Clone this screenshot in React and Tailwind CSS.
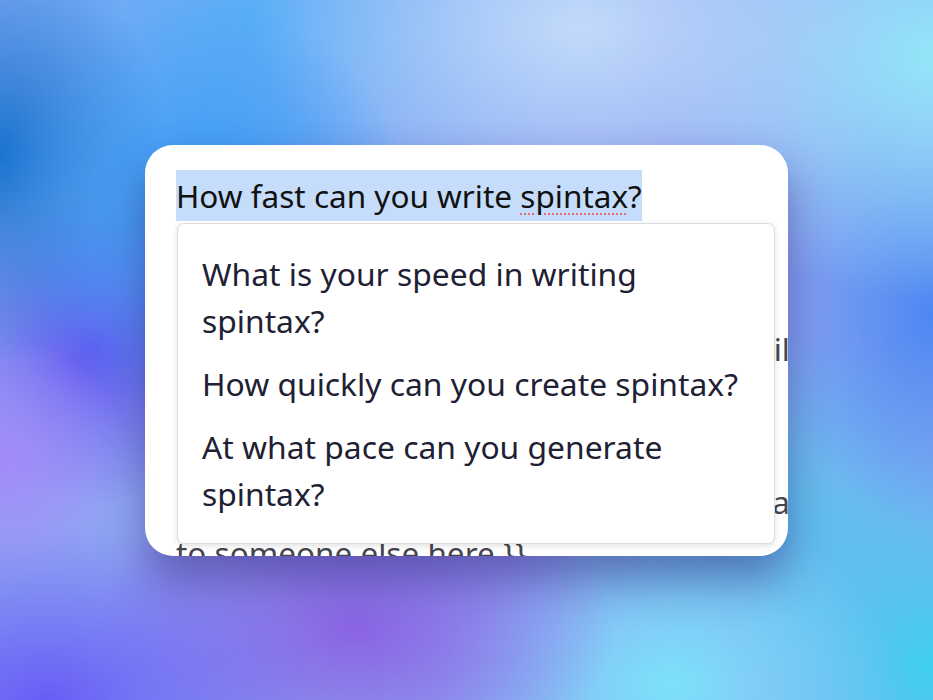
export default function App() {
  const options = [
    ["What is your speed in writing", "spintax?"],
    ["How quickly can you create spintax?"],
    ["At what pace can you generate", "spintax?"],
  ];

  return (
    <div
      className="flex h-[700px] w-full items-center justify-center bg-[#8fa6f2] [background-image:radial-gradient(ellipse_22%_30%_at_22%_30%,#2c9cf7_0%,transparent_100%),radial-gradient(ellipse_18%_30%_at_0%_22%,#1a74cf_0%,transparent_100%),radial-gradient(ellipse_35%_30%_at_62%_4%,#c2dbfa_0%,transparent_100%),radial-gradient(ellipse_30%_35%_at_100%_8%,#93e6f9_0%,transparent_100%),radial-gradient(ellipse_18%_30%_at_100%_45%,#4c88f2_0%,transparent_100%),radial-gradient(ellipse_14%_18%_at_0%_66%,#a48af9_0%,transparent_100%),radial-gradient(ellipse_16%_22%_at_10%_50%,#6358ef_0%,transparent_100%),radial-gradient(ellipse_30%_25%_at_5%_100%,#675ef6_0%,transparent_100%),radial-gradient(ellipse_28%_22%_at_38%_90%,#8a63e4_0%,transparent_100%),radial-gradient(ellipse_25%_25%_at_72%_98%,#7ce2fa_0%,transparent_100%),radial-gradient(ellipse_22%_30%_at_100%_95%,#3dcff0_0%,transparent_100%),radial-gradient(ellipse_25%_25%_at_82%_72%,#5cc4ee_0%,transparent_100%),radial-gradient(ellipse_40%_30%_at_28%_2%,#59aef7_0%,transparent_100%)]"
      style={{ fontFamily: '"Noto Sans", "Open Sans", sans-serif' }}
    >
      <div className="relative h-[411px] w-[643px] overflow-hidden rounded-[28px] bg-white shadow-[0_24px_44px_rgba(40,25,110,0.45)]">
        <div className="pl-[31px] pt-[25px] text-[31.5px] leading-[51px] text-[#45454f]">
          <div className="whitespace-nowrap">
            <span className="inline-block bg-[#c6dcfb] leading-[51px] text-[#111111]">
              How fast can you write{" "}
              <span className="underline decoration-[#e06b7d] decoration-dotted decoration-2 underline-offset-[6px]">
                spintax
              </span>
              ?
            </span>
          </div>
          <div className="h-[51px]" />
          <div className="h-[51px]" />
          <div className="-mr-[2px] flex h-[51px] justify-end whitespace-nowrap">il</div>
          <div className="h-[51px]" />
          <div className="h-[51px]" />
          <div className="-mr-[2px] flex h-[51px] justify-end whitespace-nowrap">a</div>
          <div className="whitespace-nowrap">to someone else here {"}}"}</div>
        </div>

        <div className="absolute left-[32px] top-[78px] w-[598px] rounded-[7px] border border-[#dcdcdc] bg-white py-[18px] pl-[24px] pr-[16px] shadow-[0_2px_6px_rgba(0,0,0,0.12)]">
          {options.map((lines) => (
            <div key={lines[0]} className="whitespace-nowrap py-[8px] text-[31.8px] leading-[47px] text-[#1e2133]">
              {lines.map((line) => (
                <div key={line}>{line}</div>
              ))}
            </div>
          ))}
        </div>
      </div>
    </div>
  );
}
